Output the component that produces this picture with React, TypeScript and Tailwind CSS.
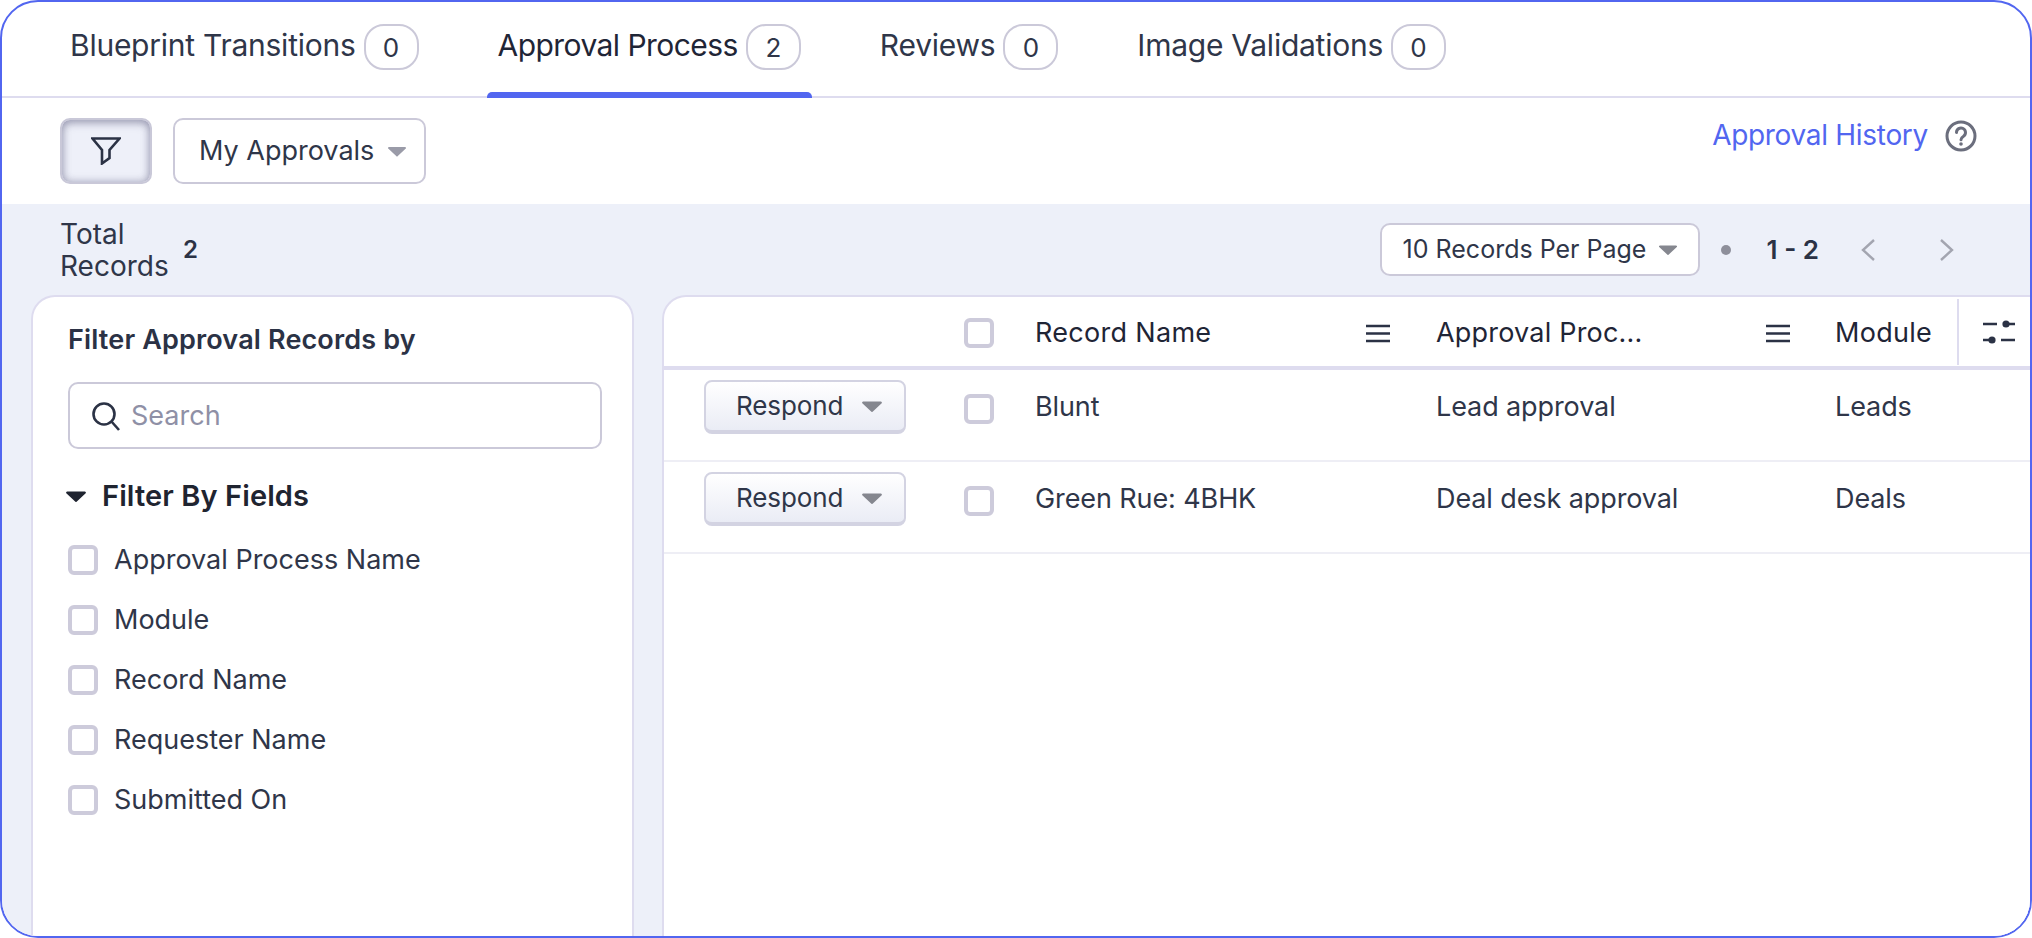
import React from 'react';

const Caret = ({ className }: { className: string }) => (
  <svg viewBox="0 0 18 10" className={className} fill="currentColor">
    <path d="M1 0.5h16a1 1 0 0 1 .8 1.6l-8 7.4a1 1 0 0 1-1.6 0l-8-7.4A1 1 0 0 1 1 .5z" />
  </svg>
);

const Checkbox = () => <span className="block w-[30px] h-[30px] shrink-0 rounded-[6px] border-4 border-[#cdcbdb] bg-white" />;

const Menu = () => (
  <svg viewBox="0 0 24 19" className="w-6 h-[19px] shrink-0" stroke="#2b3245" strokeWidth="2.4" fill="none">
    <path d="M0 2h24M0 9.5h24M0 17h24" />
  </svg>
);

const Tab = ({ label, count, active }: { label: string; count: number; active?: boolean }) => (
  <div className={`relative flex items-center h-full px-[11px] pb-[4px] ${active ? 'text-[#1f2536]' : 'text-[#2f3649]'}`}>
    <span className={`text-[30px] mt-[-4px] ${active ? 'tracking-[-0.55px]' : 'tracking-[-0.25px]'}`}>{label}</span>
    <span className="ml-[8px] flex items-center justify-center w-[55px] h-[46px] rounded-[20px] border-2 border-[#cbc9d9] text-[26px] text-[#2f3649]">{count}</span>
    {active && <span className="absolute left-0 right-0 bottom-[-2px] h-[6px] rounded-t-[5px] bg-[#5266f0]" />}
  </div>
);

const Row = ({ name, process, module }: { name: string; process: string; module: string }) => (
  <div className="grid grid-cols-[300px_71px_401px_399px_1fr] items-start h-[92px] border-b-2 border-[#eeeef5] text-[27px] leading-[34px] text-[#2f3649] tracking-[-0.1px]">
    <div className="pl-[40px] pt-[10px]">
      <button className="flex items-center justify-between w-[202px] h-[54px] pl-[30px] pr-[22px] rounded-[8px] border-2 border-b-4 border-[#d3d3e2] bg-gradient-to-b from-white to-[#eaecf5] text-[#2f3649]">
        <span className="text-[26px]">Respond</span>
        <Caret className="w-[20px] h-[11px] text-[#85878f]" />
      </button>
    </div>
    <div className="pt-[24px]">
      <Checkbox />
    </div>
    <div className="pt-[20px]">{name}</div>
    <div className="pt-[20px]">{process}</div>
    <div className="pt-[20px]">{module}</div>
  </div>
);

export default function App() {
  const fields = ['Approval Process Name', 'Module', 'Record Name', 'Requester Name', 'Submitted On'];

  return (
    <div className="h-[938px] w-[2032px] overflow-hidden rounded-[38px] border-2 border-[#5266f0] bg-white flex flex-col font-['Inter',sans-serif]">
      <div className="flex h-[96px] shrink-0 pl-[57px] gap-[57px] border-b-2 border-[#dedcef]">
        <Tab label="Blueprint Transitions" count={0} />
        <Tab label="Approval Process" count={2} active />
        <Tab label="Reviews" count={0} />
        <Tab label="Image Validations" count={0} />
      </div>

      <div className="flex h-[106px] shrink-0 pl-[58px] pr-[53px] pt-[20px]">
        <button className="flex items-center justify-center w-[92px] h-[66px] rounded-[10px] border-2 border-[#c9c8d8] bg-[#eef0f9] shadow-[inset_0_3px_8px_rgba(120,120,150,0.55),inset_0_0_8px_rgba(120,120,150,0.45)]">
          <svg viewBox="0 0 30 28" className="w-[30px] h-[28px]" fill="none" stroke="#2b3245" strokeWidth="2.6" strokeLinejoin="miter">
            <path d="M1.5 1.5h27L18.5 13v8L11 26.5V13z" />
          </svg>
        </button>
        <button className="ml-[21px] flex items-center w-[253px] h-[66px] pl-[24px] rounded-[10px] border-2 border-[#cbc9d9] text-[#2f3649]">
          <span className="text-[27px]">My Approvals</span>
          <Caret className="ml-[14px] w-[18px] h-[11px] text-[#9a9ba8]" />
        </button>
        <div className="ml-auto flex items-start gap-[17px]">
          <a className="text-[#5266f0] text-[28px] tracking-[-0.3px] mt-[-4px]">Approval History</a>
          <svg viewBox="0 0 32 32" className="w-[32px] h-[32px] mt-[2px]" fill="none" stroke="#6b6e7d" strokeWidth="3">
            <circle cx="16" cy="16" r="14" />
            <path d="M11.5 12.5a4.5 4.5 0 1 1 7 3.7c-1.6 1-2.5 1.7-2.5 3.6" strokeLinecap="round" />
            <circle cx="16" cy="24" r="1.8" fill="#6b6e7d" stroke="none" />
          </svg>
        </div>
      </div>

      <div className="flex-1 min-h-0 flex flex-col bg-[#edf0f9]">
        <div className="flex items-center h-[91px] shrink-0 pl-[58px] pr-[75px]">
          <div className="w-[110px] text-[28px] leading-[32px] text-[#2f3649] mt-[1px]">Total Records</div>
          <span className="ml-[13px] text-[24px] font-semibold text-[#2b3245]">2</span>
          <button className="ml-auto flex items-center w-[320px] h-[53px] pl-[21px] rounded-[10px] border-2 border-[#cbc9d9] bg-white text-[#2f3649]">
            <span className="text-[25px]">10 Records Per Page</span>
            <Caret className="ml-[13px] w-[18px] h-[10px] text-[#85878f]" />
          </button>
          <span className="ml-[21px] w-[10px] h-[10px] rounded-full bg-[#8e8f9b]" />
          <span className="ml-[36px] text-[26px] font-semibold text-[#2b3245]">1 - 2</span>
          <svg viewBox="0 0 16 24" className="ml-[41px] w-[16px] h-[24px]" fill="none" stroke="#a3a5b0" strokeWidth="2.4"><path d="M14 2 3 12l11 10" /></svg>
          <svg viewBox="0 0 16 24" className="ml-[63px] w-[16px] h-[24px]" fill="none" stroke="#a3a5b0" strokeWidth="2.4"><path d="M2 2l11 10L2 22" /></svg>
        </div>

        <div className="flex-1 min-h-0 flex pl-[29px] gap-[28px]">
          <aside className="w-[603px] shrink-0 rounded-t-[24px] border-2 border-b-0 border-[#dedcef] bg-white pl-[35px] pr-[30px] pt-[26px]">
            <h2 className="text-[27px] font-semibold text-[#2b3245] tracking-[0.15px] leading-[34px]">Filter Approval Records by</h2>
            <div className="mt-[25px] flex items-center w-[534px] h-[67px] pl-[21px] rounded-[10px] border-2 border-[#cbc9d9]">
              <svg viewBox="0 0 30 30" className="w-[30px] h-[30px]" fill="none" stroke="#2b3245" strokeWidth="2.6">
                <circle cx="13" cy="13" r="10.5" />
                <path d="M20.5 20.5 28 29" />
              </svg>
              <span className="ml-[10px] mt-[2px] text-[27px] text-[#8f90a6]">Search</span>
            </div>
            <div className="mt-[28px] flex items-center h-[38px]">
              <Caret className="ml-[-2px] w-[20px] h-[11px] text-[#1f2430]" />
              <span className="ml-[16px] text-[29px] font-semibold text-[#1f2430] tracking-[0.1px]">Filter By Fields</span>
            </div>
            <div className="mt-[30px] flex flex-col gap-[30px]">
              {fields.map(f => (
                <label key={f} className="flex items-center h-[30px] gap-[16px] text-[27px] text-[#2f3649]">
                  <Checkbox />
                  <span>{f}</span>
                </label>
              ))}
            </div>
          </aside>

          <section className="flex-1 min-w-0 rounded-tl-[24px] border-2 border-r-0 border-b-0 border-[#dedcef] bg-white">
            <div className="grid grid-cols-[300px_71px_401px_399px_124px_1fr] items-center h-[73px] pt-[3px] border-b-4 border-[#dedcef] text-[27px] text-[#1f2536] tracking-[0.3px]">
              <div />
              <Checkbox />
              <div className="flex items-center justify-between pr-[46px]">
                <span>Record Name</span>
                <Menu />
              </div>
              <div className="flex items-center justify-between pr-[45px]">
                <span className="whitespace-nowrap tracking-[0.2px]">Approval Proc...</span>
                <Menu />
              </div>
              <div className="h-full flex items-center border-r-2 border-[#dedcef] mt-[-3px] pt-[3px]">Module</div>
              <div className="flex justify-start pl-[24px] mt-[-2px]">
                <svg viewBox="0 0 32 24" className="w-[32px] h-[24px]" fill="none" stroke="#2b3245" strokeWidth="2.6">
                  <path d="M0 4h14M23 4h9M0 20h9M18 20h14" />
                  <circle cx="23" cy="4" r="3.6" fill="#2b3245" stroke="none" />
                  <circle cx="9" cy="20" r="3.6" fill="#2b3245" stroke="none" />
                </svg>
              </div>
            </div>
            <Row name="Blunt" process="Lead approval" module="Leads" />
            <Row name="Green Rue: 4BHK" process="Deal desk approval" module="Deals" />
          </section>
        </div>
      </div>
    </div>
  );
}
